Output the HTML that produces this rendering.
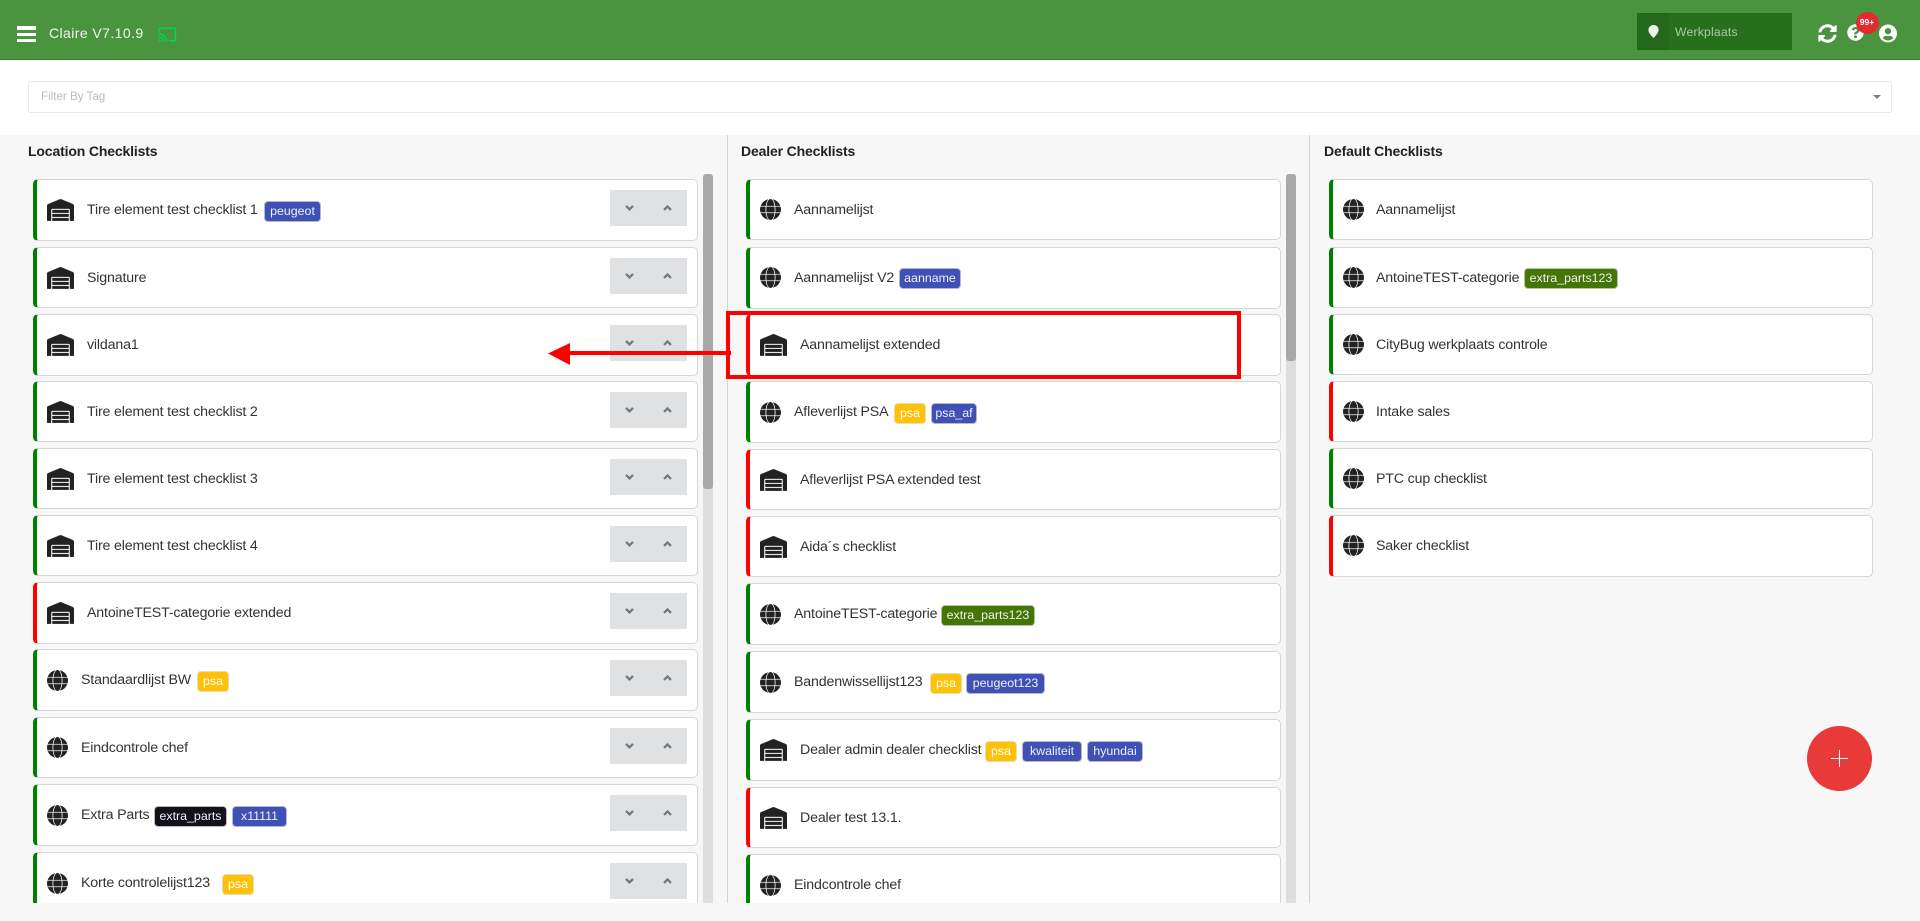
<!DOCTYPE html>
<html lang="nl"><head><meta charset="utf-8"><title>Claire</title>
<style>
html,body{margin:0;padding:0;width:1920px;height:921px;overflow:hidden;background:#f7f7f7;font-family:"Liberation Sans",sans-serif;color:#333}
*{box-sizing:border-box}
.a,.c,.t,.g,.b,.i,.d{position:absolute}
#top{position:absolute;left:0;top:0;width:1920px;height:60px;background:#4a943f;border-bottom:1px solid #3b7c31}
#flt{position:absolute;left:0;top:60px;width:1920px;height:75px;background:#fff}
#clip{position:absolute;left:0;top:0;width:1920px;height:903px;overflow:hidden}
.c{background:#fff;border:1px solid #d6d6d7;border-left:4px solid #008000;border-radius:5px}
.r{border-left-color:#f00}
.t{font-size:14.2px;letter-spacing:-.16px;line-height:20px;white-space:nowrap;color:#333}
.g{height:21px;line-height:19px;font-size:12.4px;color:#f0f0f8;text-align:center;border-radius:4px;border:1px solid #b4b8cf;background:#3f51b5;white-space:nowrap}
.y{background:#ffc107;border-color:#e5dcb8;color:#fff}
.k{background:#15111a;border-color:#bbb}
.n{background:#437604;border-color:#b6c4a2}
.b{width:77px;height:36px;background:#e0e1e2;left:610px}
.h{position:absolute;font-size:14px;letter-spacing:-.15px;font-weight:bold;line-height:20px;color:#222;white-space:nowrap}
</style></head><body>
<svg width="0" height="0" style="position:absolute"><defs>
<symbol id="wh" viewBox="0 0 640 512"><path fill="#222" stroke="#222" stroke-width="8" d="M504 352H136.4c-4.4 0-8 3.6-8 8l-.1 48c0 4.4 3.6 8 8 8H504c4.4 0 8-3.6 8-8v-48c0-4.4-3.6-8-8-8zm0 96H136.1c-4.4 0-8 3.6-8 8l-.1 48c0 4.4 3.6 8 8 8h368c4.4 0 8-3.6 8-8v-48c0-4.4-3.6-8-8-8zm0-192H136.6c-4.4 0-8 3.6-8 8l-.1 48c0 4.4 3.6 8 8 8H504c4.4 0 8-3.6 8-8v-48c0-4.4-3.6-8-8-8zm106.5-139L338.4 3.7a48.15 48.15 0 0 0-36.9 0L29.5 117C11.7 124.5 0 141.9 0 161.3V504c0 4.4 3.6 8 8 8h80c4.4 0 8-3.6 8-8V256c0-17.6 14.6-32 32.6-32h382.8c18 0 32.6 14.4 32.6 32v248c0 4.4 3.6 8 8 8h80c4.4 0 8-3.6 8-8V161.3c0-19.4-11.7-36.8-29.5-44.3z"/></symbol>
<symbol id="gl" viewBox="0 0 496 512"><path fill="#222" stroke="#222" stroke-width="14" d="M336.5 160C322 70.7 287.8 8 248 8s-74 62.7-88.5 152h177zM152 256c0 22.2 1.2 43.5 3.3 64h185.3c2.1-20.5 3.3-41.8 3.3-64s-1.2-43.5-3.3-64H155.3c-2.1 20.5-3.3 41.8-3.3 64zm324.7-96c-28.6-67.9-86.5-120.4-158-141.6 24.4 33.8 41.2 84.7 50 141.6h108zM177.2 18.4C105.8 39.6 47.8 92.1 19.3 160h108c8.7-56.9 25.5-107.8 49.9-141.6zM487.4 192H372.7c2.1 21 3.3 42.5 3.3 64s-1.2 43-3.3 64h114.6c5.5-20.5 8.6-41.8 8.6-64s-3.1-43.5-8.5-64zM120 256c0-21.5 1.2-43 3.3-64H8.6C3.2 212.5 0 233.8 0 256s3.2 43.5 8.6 64h114.6c-2-21-3.2-42.5-3.2-64zm39.5 96c14.5 89.3 48.7 152 88.5 152s74-62.7 88.5-152h-177zm159.3 141.6c71.4-21.2 129.4-73.7 158-141.6h-108c-8.8 56.9-25.6 107.8-50 141.6zM19.3 352c28.6 67.9 86.5 120.4 158 141.6-24.4-33.8-41.2-84.7-50-141.6h-108z"/></symbol>
<symbol id="ch" viewBox="0 0 12 8"><path d="M2 2.200L6 6.200l4-4" fill="none" stroke="#777" stroke-width="2.6"/></symbol>
<symbol id="cu" viewBox="0 0 12 8"><path d="M2 6.800L6 2.800l4 4" fill="none" stroke="#777" stroke-width="2.6"/></symbol>
</defs></svg>

<div id="top">
  <div class="a" style="left:17px;top:26px;width:19px;height:3.5px;background:#fff"></div>
  <div class="a" style="left:17px;top:32.500px;width:19px;height:3.500px;background:#fff"></div>
  <div class="a" style="left:17px;top:38.500px;width:19px;height:3.500px;background:#fff"></div>
  <div class="a" style="left:49px;top:23px;font-size:14px;line-height:20px;color:#f1f6f0;letter-spacing:.42px;white-space:nowrap">Claire V7.10.9</div>
  <svg class="a" style="left:158px;top:25px" width="19" height="19" viewBox="0 0 24 24"><path fill="#00d455" d="M21 3H3c-1.1 0-2 .9-2 2v3h2V5h18v14h-7v2h7c1.1 0 2-.9 2-2V5c0-1.1-.9-2-2-2zM1 18v3h3c0-1.66-1.34-3-3-3zm0-4v2c2.76 0 5 2.24 5 5h2c0-3.87-3.13-7-7-7zm0-4v2c4.97 0 9 4.03 9 9h2c0-6.08-4.93-11-11-11z"/></svg>
  <div class="a" style="left:1637px;top:13px;width:155px;height:37px;background:#276f1d"></div>
  <div class="a" style="left:1637px;top:13px;width:32px;height:37px;background:#24691b"></div>
  <svg class="a" style="left:1648px;top:25px" width="11" height="13" viewBox="0 0 11 13"><path fill="#eef3ec" d="M5.5 0C8.5 0 10.6 2.1 10.6 4.9 10.6 8 7.2 11.2 5.5 13 3.800 11.200.4 8 .4 4.900.4 2.100 2.500 0 5.500 0z"/></svg>
  <div class="a" style="left:1675px;top:22px;font-size:12.2px;line-height:20px;color:#adc9a8;letter-spacing:.2px;white-space:nowrap">Werkplaats</div>
  <svg class="a" style="left:1818px;top:24px" width="19" height="19" viewBox="0 0 512 512"><path fill="#fff" d="M370.72 133.28C339.458 104.008 298.888 87.962 255.848 88c-77.458.068-144.328 53.178-162.791 126.85-1.344 5.363-6.122 9.15-11.651 9.15H24.103c-7.498 0-13.194-6.807-11.807-14.176C33.933 94.924 134.813 8 256 8c66.448 0 126.791 26.136 171.315 68.685L463.03 40.97C478.149 25.851 504 36.559 504 57.941V192c0 13.255-10.745 24-24 24H345.941c-21.382 0-32.09-25.851-16.971-40.971l41.75-41.749zM32 296h134.059c21.382 0 32.09 25.851 16.971 40.971l-41.75 41.75c31.262 29.273 71.835 45.319 114.876 45.28 77.418-.07 144.315-53.144 162.787-126.849 1.344-5.363 6.122-9.15 11.651-9.15h57.304c7.498 0 13.194 6.807 11.807 14.176C478.067 417.076 377.187 504 256 504c-66.448 0-126.791-26.136-171.315-68.685L48.97 471.03C33.851 486.149 8 475.441 8 454.059V320c0-13.255 10.745-24 24-24z"/></svg>
  <svg class="a" style="left:1847px;top:24px" width="17" height="17" viewBox="0 0 512 512"><path fill="#fff" d="M504 256c0 136.997-111.043 248-248 248S8 392.997 8 256C8 119.083 119.043 8 256 8s248 111.083 248 248zM262.655 90c-54.497 0-89.255 22.957-116.549 63.758-3.536 5.286-2.353 12.415 2.715 16.258l34.699 26.31c5.205 3.947 12.621 3.008 16.665-2.122 17.864-22.658 30.113-35.797 57.303-35.797 20.429 0 45.698 13.148 45.698 32.958 0 14.976-12.363 22.667-32.534 33.976C247.128 238.528 216 254.941 216 296v4c0 6.627 5.373 12 12 12h56c6.627 0 12-5.373 12-12v-1.333c0-28.462 83.186-29.647 83.186-106.667 0-58.002-60.165-102-116.531-102zM256 338c-25.365 0-46 20.635-46 46 0 25.364 20.635 46 46 46s46-20.636 46-46c0-25.365-20.635-46-46-46z"/></svg>
  <div class="a" style="left:1855.500px;top:12px;width:23px;height:22px;border-radius:50%;background:#e02b2f;color:#fff;font-size:8.5px;font-weight:bold;line-height:21px;text-align:center">99+</div>
  <svg class="a" style="left:1879px;top:24px" width="18" height="19" viewBox="0 0 496 512"><path fill="#fff" d="M248 8C111 8 0 119 0 256s111 248 248 248 248-111 248-248S385 8 248 8zm0 96c48.600 0 88 39.400 88 88s-39.400 88-88 88-88-39.400-88-88 39.400-88 88-88zm0 344c-58.700 0-111.300-26.600-146.500-68.200 18.800-35.400 55.600-59.800 98.500-59.800 2.400 0 4.800.4 7.100 1.100 13 4.200 26.600 6.900 40.900 6.900 14.300 0 28-2.700 40.900-6.900 2.300-.7 4.700-1.100 7.100-1.100 42.900 0 79.700 24.400 98.500 59.800C359.300 421.400 306.700 448 248 448z"/></svg>
</div>

<div id="flt"></div>
<div class="a" style="left:28px;top:81px;width:1864px;height:32px;background:#fff;border:1px solid #e8e8e8;border-radius:3px"></div>
<div class="a" style="left:41px;top:87px;font-size:11.600px;line-height:20px;color:#bdbdbd;white-space:nowrap">Filter By Tag</div>
<div class="a" style="left:1873px;top:95px;width:0;height:0;border-left:4px solid transparent;border-right:4px solid transparent;border-top:4px solid #808080"></div>

<div class="h" style="left:28px;top:141px">Location Checklists</div>
<div class="h" style="left:741px;top:141px">Dealer Checklists</div>
<div class="h" style="left:1324px;top:141px">Default Checklists</div>

<div id="clip">
  <div class="a" style="left:727px;top:135px;width:1px;height:768px;background:#d4d4d5"></div>
  <div class="a" style="left:1309px;top:135px;width:1px;height:768px;background:#d4d4d5"></div>
  <div class="a" style="left:703px;top:174px;width:10px;height:740px;background:#dedede;border-radius:3px 3px 0 0"></div>
  <div class="a" style="left:703px;top:174px;width:10px;height:315px;background:#a8a8a8;border-radius:3px"></div>
  <div class="a" style="left:1286px;top:174px;width:10px;height:740px;background:#dedede;border-radius:3px 3px 0 0"></div>
  <div class="a" style="left:1286px;top:174px;width:10px;height:187px;background:#a8a8a8;border-radius:3px"></div>

  <!-- LEFT -->
  <div class="c" style="left:33px;top:179px;width:665px;height:62px"></div><svg class="i" style="left:47px;top:199px" width="27" height="22"><use href="#wh"/></svg><div class="t" style="left:87px;top:200px">Tire element test checklist 1</div><div class="g" style="left:264px;top:201px;width:57px">peugeot</div>
  <div class="c" style="left:33px;top:247px;width:665px;height:61px"></div><svg class="i" style="left:47px;top:267px" width="27" height="22"><use href="#wh"/></svg><div class="t" style="left:87px;top:268px">Signature</div>
  <div class="c" style="left:33px;top:314px;width:665px;height:62px"></div><svg class="i" style="left:47px;top:334px" width="27" height="22"><use href="#wh"/></svg><div class="t" style="left:87px;top:335px">vildana1</div>
  <div class="c" style="left:33px;top:381px;width:665px;height:61px"></div><svg class="i" style="left:47px;top:401px" width="27" height="22"><use href="#wh"/></svg><div class="t" style="left:87px;top:402px">Tire element test checklist 2</div>
  <div class="c" style="left:33px;top:448px;width:665px;height:61px"></div><svg class="i" style="left:47px;top:468px" width="27" height="22"><use href="#wh"/></svg><div class="t" style="left:87px;top:469px">Tire element test checklist 3</div>
  <div class="c" style="left:33px;top:515px;width:665px;height:61px"></div><svg class="i" style="left:47px;top:535px" width="27" height="22"><use href="#wh"/></svg><div class="t" style="left:87px;top:536px">Tire element test checklist 4</div>
  <div class="c r" style="left:33px;top:582px;width:665px;height:62px"></div><svg class="i" style="left:47px;top:602px" width="27" height="22"><use href="#wh"/></svg><div class="t" style="left:87px;top:603px">AntoineTEST-categorie extended</div>
  <div class="c" style="left:33px;top:649px;width:665px;height:62px"></div><svg class="i" style="left:47px;top:670px" width="21" height="21"><use href="#gl"/></svg><div class="t" style="left:81px;top:670px">Standaardlijst BW</div><div class="g y" style="left:197px;top:671px;width:32px">psa</div>
  <div class="c" style="left:33px;top:717px;width:665px;height:61px"></div><svg class="i" style="left:47px;top:737px" width="21" height="21"><use href="#gl"/></svg><div class="t" style="left:81px;top:738px">Eindcontrole chef</div>
  <div class="c" style="left:33px;top:784px;width:665px;height:62px"></div><svg class="i" style="left:47px;top:805px" width="21" height="21"><use href="#gl"/></svg><div class="t" style="left:81px;top:805px">Extra Parts</div><div class="g k" style="left:154px;top:806px;width:73px">extra_parts</div><div class="g" style="left:232px;top:806px;width:55px">x11111</div>
  <div class="c" style="left:33px;top:852px;width:665px;height:62px"></div><svg class="i" style="left:47px;top:873px" width="21" height="21"><use href="#gl"/></svg><div class="t" style="left:81px;top:873px">Korte controlelijst123</div><div class="g y" style="left:222px;top:874px;width:32px">psa</div>

  <!-- buttons -->
  <div class="b" style="top:190px"></div><svg class="i" style="left:624px;top:204px" width="11" height="7"><use href="#ch"/></svg><svg class="i" style="left:662px;top:204px" width="11" height="7"><use href="#cu"/></svg>
  <div class="b" style="top:258px"></div><svg class="i" style="left:624px;top:272px" width="11" height="7"><use href="#ch"/></svg><svg class="i" style="left:662px;top:272px" width="11" height="7"><use href="#cu"/></svg>
  <div class="b" style="top:325px"></div><svg class="i" style="left:624px;top:339px" width="11" height="7"><use href="#ch"/></svg><svg class="i" style="left:662px;top:339px" width="11" height="7"><use href="#cu"/></svg>
  <div class="b" style="top:392px"></div><svg class="i" style="left:624px;top:406px" width="11" height="7"><use href="#ch"/></svg><svg class="i" style="left:662px;top:406px" width="11" height="7"><use href="#cu"/></svg>
  <div class="b" style="top:459px"></div><svg class="i" style="left:624px;top:473px" width="11" height="7"><use href="#ch"/></svg><svg class="i" style="left:662px;top:473px" width="11" height="7"><use href="#cu"/></svg>
  <div class="b" style="top:526px"></div><svg class="i" style="left:624px;top:540px" width="11" height="7"><use href="#ch"/></svg><svg class="i" style="left:662px;top:540px" width="11" height="7"><use href="#cu"/></svg>
  <div class="b" style="top:593px"></div><svg class="i" style="left:624px;top:607px" width="11" height="7"><use href="#ch"/></svg><svg class="i" style="left:662px;top:607px" width="11" height="7"><use href="#cu"/></svg>
  <div class="b" style="top:660px"></div><svg class="i" style="left:624px;top:674px" width="11" height="7"><use href="#ch"/></svg><svg class="i" style="left:662px;top:674px" width="11" height="7"><use href="#cu"/></svg>
  <div class="b" style="top:728px"></div><svg class="i" style="left:624px;top:742px" width="11" height="7"><use href="#ch"/></svg><svg class="i" style="left:662px;top:742px" width="11" height="7"><use href="#cu"/></svg>
  <div class="b" style="top:795px"></div><svg class="i" style="left:624px;top:809px" width="11" height="7"><use href="#ch"/></svg><svg class="i" style="left:662px;top:809px" width="11" height="7"><use href="#cu"/></svg>
  <div class="b" style="top:863px"></div><svg class="i" style="left:624px;top:877px" width="11" height="7"><use href="#ch"/></svg><svg class="i" style="left:662px;top:877px" width="11" height="7"><use href="#cu"/></svg>

  <!-- MIDDLE -->
  <div class="c" style="left:746px;top:179px;width:535px;height:61px"></div><svg class="i" style="left:760px;top:199px" width="21" height="21"><use href="#gl"/></svg><div class="t" style="left:794px;top:200px">Aannamelijst</div>
  <div class="c" style="left:746px;top:247px;width:535px;height:62px"></div><svg class="i" style="left:760px;top:267px" width="21" height="21"><use href="#gl"/></svg><div class="t" style="left:794px;top:268px">Aannamelijst V2</div><div class="g" style="left:899px;top:268px;width:62px">aanname</div>
  <div class="c r" style="left:746px;top:314px;width:535px;height:62px"></div><svg class="i" style="left:760px;top:334px" width="27" height="22"><use href="#wh"/></svg><div class="t" style="left:800px;top:335px">Aannamelijst extended</div>
  <div class="c" style="left:746px;top:381px;width:535px;height:62px"></div><svg class="i" style="left:760px;top:402px" width="21" height="21"><use href="#gl"/></svg><div class="t" style="left:794px;top:402px">Afleverlijst PSA</div><div class="g y" style="left:894px;top:403px;width:32px">psa</div><div class="g" style="left:931px;top:403px;width:46px">psa_af</div>
  <div class="c r" style="left:746px;top:449px;width:535px;height:61px"></div><svg class="i" style="left:760px;top:469px" width="27" height="22"><use href="#wh"/></svg><div class="t" style="left:800px;top:470px">Afleverlijst PSA extended test</div>
  <div class="c r" style="left:746px;top:516px;width:535px;height:61px"></div><svg class="i" style="left:760px;top:536px" width="27" height="22"><use href="#wh"/></svg><div class="t" style="left:800px;top:537px">Aida´s checklist</div>
  <div class="c" style="left:746px;top:583px;width:535px;height:62px"></div><svg class="i" style="left:760px;top:604px" width="21" height="21"><use href="#gl"/></svg><div class="t" style="left:794px;top:604px">AntoineTEST-categorie</div><div class="g n" style="left:941px;top:605px;width:94px">extra_parts123</div>
  <div class="c" style="left:746px;top:651px;width:535px;height:62px"></div><svg class="i" style="left:760px;top:672px" width="21" height="21"><use href="#gl"/></svg><div class="t" style="left:794px;top:672px">Bandenwissellijst123</div><div class="g y" style="left:930px;top:673px;width:32px">psa</div><div class="g" style="left:966px;top:673px;width:79px">peugeot123</div>
  <div class="c" style="left:746px;top:719px;width:535px;height:62px"></div><svg class="i" style="left:760px;top:739px" width="27" height="22"><use href="#wh"/></svg><div class="t" style="left:800px;top:740px">Dealer admin dealer checklist</div><div class="g y" style="left:985px;top:741px;width:32px">psa</div><div class="g" style="left:1022px;top:741px;width:60px">kwaliteit</div><div class="g" style="left:1087px;top:741px;width:56px">hyundai</div>
  <div class="c r" style="left:746px;top:787px;width:535px;height:61px"></div><svg class="i" style="left:760px;top:807px" width="27" height="22"><use href="#wh"/></svg><div class="t" style="left:800px;top:808px">Dealer test 13.1.</div>
  <div class="c" style="left:746px;top:854px;width:535px;height:62px"></div><svg class="i" style="left:760px;top:875px" width="21" height="21"><use href="#gl"/></svg><div class="t" style="left:794px;top:875px">Eindcontrole chef</div>

  <!-- RIGHT -->
  <div class="c" style="left:1329px;top:179px;width:544px;height:61px"></div><svg class="i" style="left:1343px;top:199px" width="21" height="21"><use href="#gl"/></svg><div class="t" style="left:1376px;top:200px">Aannamelijst</div>
  <div class="c" style="left:1329px;top:247px;width:544px;height:61px"></div><svg class="i" style="left:1343px;top:267px" width="21" height="21"><use href="#gl"/></svg><div class="t" style="left:1376px;top:268px">AntoineTEST-categorie</div><div class="g n" style="left:1524px;top:268px;width:94px">extra_parts123</div>
  <div class="c" style="left:1329px;top:314px;width:544px;height:61px"></div><svg class="i" style="left:1343px;top:334px" width="21" height="21"><use href="#gl"/></svg><div class="t" style="left:1376px;top:335px">CityBug werkplaats controle</div>
  <div class="c r" style="left:1329px;top:381px;width:544px;height:61px"></div><svg class="i" style="left:1343px;top:401px" width="21" height="21"><use href="#gl"/></svg><div class="t" style="left:1376px;top:402px">Intake sales</div>
  <div class="c" style="left:1329px;top:448px;width:544px;height:61px"></div><svg class="i" style="left:1343px;top:468px" width="21" height="21"><use href="#gl"/></svg><div class="t" style="left:1376px;top:469px">PTC cup checklist</div>
  <div class="c r" style="left:1329px;top:515px;width:544px;height:62px"></div><svg class="i" style="left:1343px;top:535px" width="21" height="21"><use href="#gl"/></svg><div class="t" style="left:1376px;top:536px">Saker checklist</div>
</div>

<div class="a" style="left:726px;top:311px;width:515px;height:68px;border:4px solid #f00"></div>
<svg class="a" style="left:545px;top:340px" width="190" height="28" viewBox="0 0 190 28"><path d="M186 11H25V3L3 13.500 25 25V15H186z" fill="#f00"/></svg>

<div class="a" style="left:1807px;top:726px;width:65px;height:65px;border-radius:50%;background:#e93a3a"></div>
<div class="a" style="left:1831px;top:758px;width:17px;height:1px;background:#fff"></div>
<div class="a" style="left:1839px;top:750px;width:1px;height:17px;background:#fff"></div>
</body></html>
